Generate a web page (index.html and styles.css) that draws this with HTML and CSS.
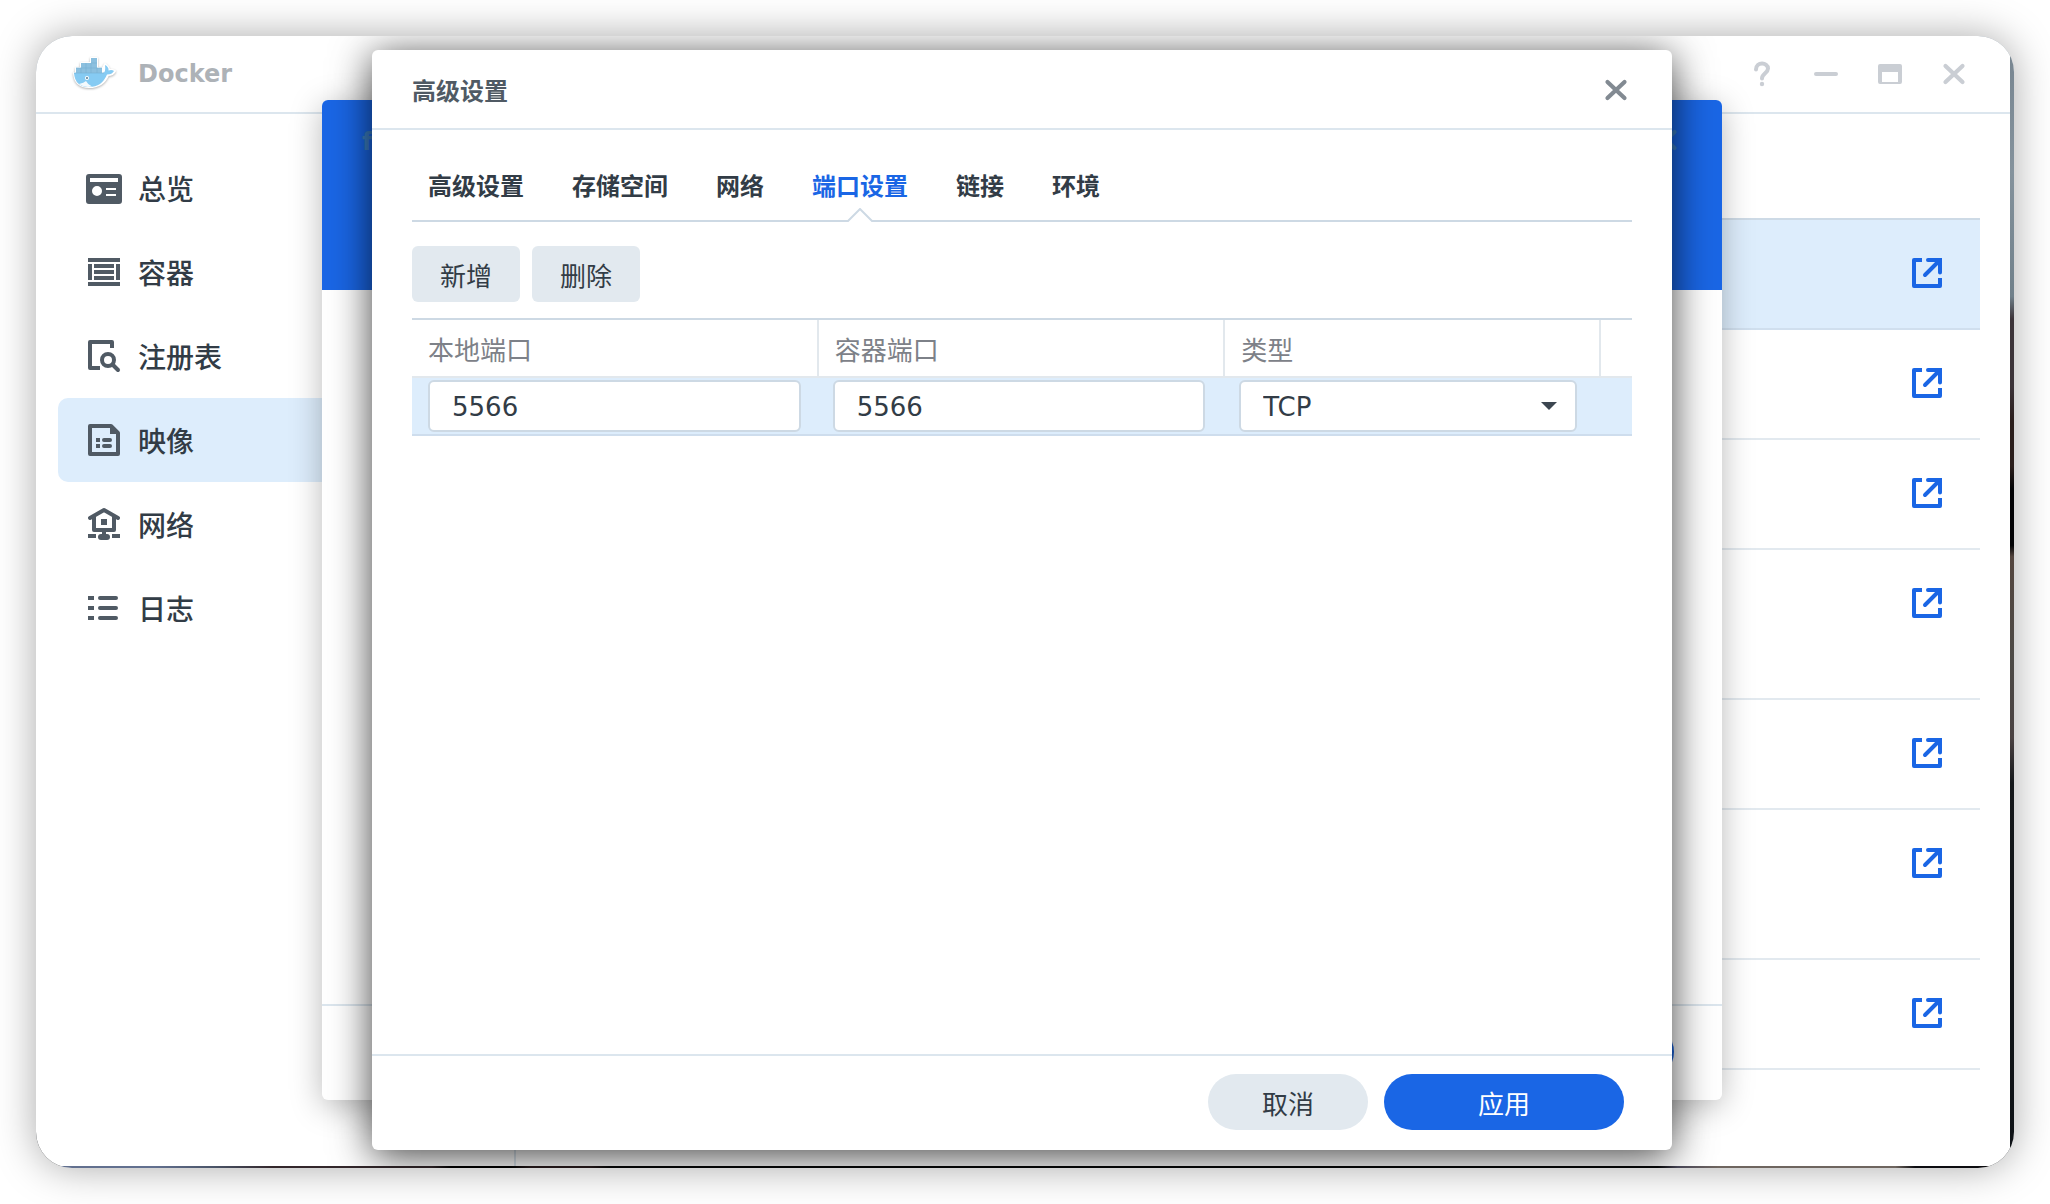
FILE: index.html
```html
<!DOCTYPE html>
<html lang="zh-CN">
<head>
<meta charset="utf-8">
<title>Docker</title>
<meta name="viewport" content="width=device-width, initial-scale=1">
<link rel="stylesheet" href="styles.css">
</head>
<body>
<svg class="sprite" aria-hidden="true">
  <symbol id="open" viewBox="0 0 30 30">
    <path d="M10 2H2V28H28V20" fill="none" stroke="currentColor" stroke-width="4" stroke-linejoin="round"/>
    <path d="M16 2H28V14.500M27 3L13 17" fill="none" stroke="currentColor" stroke-width="4" stroke-linecap="round"/>
    <path d="M22 0H30V8Z" fill="currentColor"/>
  </symbol>
  <symbol id="close" viewBox="0 0 32 32">
    <path d="M7.500 8L24.500 24M24.500 8L7.500 24" fill="none" stroke="currentColor" stroke-width="4.200" stroke-linecap="round"/>
  </symbol>
</svg>

<div class="window">
  <div class="app">
    <header class="titlebar">
      <svg class="logo" viewBox="0 0 46 36" aria-hidden="true">
        <g class="logo-edge">
          <path d="M2 17H32Q30 12 33 8Q37 11 37 14Q41 13 43 15Q41 19 36 19Q31 31 17 31Q3 31 2 17Z"/>
          <path d="M4 17V12H9V7H19V2H25V12H30V17Z"/>
        </g>
        <path fill="#86cbf3" d="M2 17H31Q34 16 33 9Q37 11 36.500 14.500Q40 13.500 42 15Q40 18.500 35 18.500Q30 31 17 31Q3 31 2 17Z"/>
        <path fill="#8cc0df" d="M4 17V12H9V7H19V2H25V12H30V17Z"/>
        <path fill="none" stroke="#7ab3d4" stroke-width="0.700" d="M4 12H30M9 12V17M14 7V17M19 7V17M25 12V17M19 7H25M2 17H32"/>
        <path fill="#f4fafd" d="M7 28Q12 27 14 25Q16 29 20 30.500Q12 32 7 28Z"/>
        <circle cx="15" cy="22" r="2" fill="#fff"/><circle cx="15" cy="22" r="1" fill="#557a90"/>
      </svg>
      <h1 class="app-title">Docker</h1>
      <div class="window-controls">
        <button type="button" aria-label="帮助"><svg viewBox="0 0 32 32"><path d="M10 11.500C10 3.500 22 4 22 10.500C22 15 16 15.500 16 20.500" fill="none" stroke="currentColor" stroke-width="4" stroke-linecap="round"/><circle cx="16" cy="26" r="2.200" fill="currentColor"/></svg></button>
        <button type="button" aria-label="最小化"><svg viewBox="0 0 32 32"><rect x="4" y="14" width="24" height="4" rx="2" fill="currentColor"/></svg></button>
        <button type="button" aria-label="最大化"><svg viewBox="0 0 32 32"><path fill="currentColor" fill-rule="evenodd" d="M6 6H26Q28 6 28 8V24Q28 26 26 26H6Q4 26 4 24V8Q4 6 6 6ZM8 14V24H24V14Z"/></svg></button>
        <button type="button" aria-label="关闭"><svg><use href="#close"/></svg></button>
      </div>
    </header>
    <div class="body">
      <nav class="sidebar">
        <a class="nav-item" href="#overview"><svg viewBox="0 0 36 36"><path fill="currentColor" fill-rule="evenodd" d="M3 4H33Q36 4 36 7V31Q36 34 33 34H3Q0 34 0 31V7Q0 4 3 4ZM4 8V12H32V8ZM20 18V20H30V18ZM20 24V26H30V24ZM6 21A5 5 0 1 0 16 21A5 5 0 1 0 6 21Z"/></svg><span>总览</span></a>
        <a class="nav-item" href="#container"><svg viewBox="0 0 36 36"><path fill="currentColor" d="M2 4H34V8H2ZM2 28H34V32H2ZM2 10H6V26H2ZM30 10H34V26H30ZM8 10H28V14H8ZM8 16H28V20H8ZM8 22H28V26H8Z"/></svg><span>容器</span></a>
        <a class="nav-item" href="#registry"><svg viewBox="0 0 36 36"><g fill="none" stroke="currentColor" stroke-width="4"><path stroke-linejoin="round" d="M26 10V4H4V30H14"/><circle cx="22" cy="22" r="6"/><path stroke-linecap="round" d="M26.500 26.500L32 32"/></g></svg><span>注册表</span></a>
        <a class="nav-item selected" href="#image" aria-current="page"><svg viewBox="0 0 36 36"><path fill="none" stroke="currentColor" stroke-width="4" stroke-linejoin="round" d="M4 4H25L32 11V32H4Z"/><path fill="currentColor" d="M24 3V12H33ZM10 16H14V20H10ZM10 22H14V26H10Z"/><path stroke="currentColor" stroke-width="4" stroke-linecap="round" d="M18 18H24M18 24H24"/></svg><span>映像</span></a>
        <a class="nav-item" href="#network"><svg viewBox="0 0 36 36"><g fill="none" stroke="currentColor" stroke-width="4" stroke-linejoin="round"><path stroke-linecap="round" d="M4 12L18 4L32 12"/><path d="M8 11V24H28V11"/></g><path fill="currentColor" d="M15 13H21V19H15ZM16 25H20V29H16ZM2 28H10V32H2ZM26 28H34V32H26Z"/><rect x="12" y="28" width="12" height="6" rx="3" fill="currentColor"/></svg><span>网络</span></a>
        <a class="nav-item" href="#log"><svg viewBox="0 0 36 36"><path fill="currentColor" d="M2 6H8V10H2ZM2 16H8V20H2ZM2 26H8V30H2Z"/><path stroke="currentColor" stroke-width="4" stroke-linecap="round" d="M14 8H30M14 18H30M14 28H30"/></svg><span>日志</span></a>
      </nav>
      <main class="images">
        <ul class="image-list">
          <li class="image-row selected"><a href="#open-1" aria-label="打开"><svg><use href="#open"/></svg></a></li>
          <li class="image-row"><a href="#open-2" aria-label="打开"><svg><use href="#open"/></svg></a></li>
          <li class="image-row"><a href="#open-3" aria-label="打开"><svg><use href="#open"/></svg></a></li>
          <li class="image-row tall"><a href="#open-4" aria-label="打开"><svg><use href="#open"/></svg></a></li>
          <li class="image-row"><a href="#open-5" aria-label="打开"><svg><use href="#open"/></svg></a></li>
          <li class="image-row tall"><a href="#open-6" aria-label="打开"><svg><use href="#open"/></svg></a></li>
          <li class="image-row"><a href="#open-7" aria-label="打开"><svg><use href="#open"/></svg></a></li>
        </ul>
      </main>
    </div>
  </div>

  <section class="dialog wizard">
    <header class="wizard-head">
      <h2>f</h2>
      <button type="button" class="wizard-close" aria-label="关闭"><svg><use href="#close"/></svg></button>
    </header>
    <footer class="wizard-foot"><button type="button" class="pill primary" aria-label="下一步"></button></footer>
  </section>

  <section class="dialog settings" role="dialog" aria-labelledby="settings-title">
    <header class="settings-head">
      <h2 id="settings-title">高级设置</h2>
      <button type="button" class="settings-close" aria-label="关闭"><svg><use href="#close"/></svg></button>
    </header>
    <div class="settings-body">
      <nav class="tabs">
        <a class="tab" href="#advanced">高级设置</a>
        <a class="tab" href="#volume">存储空间</a>
        <a class="tab" href="#net">网络</a>
        <a class="tab active" href="#port" aria-current="true">端口设置<svg class="notch" viewBox="0 0 26 14" aria-hidden="true"><path d="M0 14L2 12H24L26 14Z" fill="#fff"/><path d="M0 13H1L13 1L25 13H26" fill="#fff" stroke="#cdd9e4" stroke-width="2"/></svg></a>
        <a class="tab" href="#link">链接</a>
        <a class="tab" href="#env">环境</a>
      </nav>
      <div class="toolbar">
        <button type="button" class="tool">新增</button>
        <button type="button" class="tool">删除</button>
      </div>
      <table class="ports">
        <colgroup><col class="col-port"><col class="col-port"><col class="col-type"><col></colgroup>
        <thead>
          <tr><th scope="col">本地端口</th><th scope="col">容器端口</th><th scope="col">类型</th><td></td></tr>
        </thead>
        <tbody>
          <tr>
            <td><input type="text" value="5566" aria-label="本地端口"></td>
            <td><input type="text" value="5566" aria-label="容器端口"></td>
            <td><div class="select"><select aria-label="类型"><option>TCP</option><option>UDP</option></select></div></td>
            <td></td>
          </tr>
        </tbody>
      </table>
    </div>
    <footer class="settings-foot">
      <button type="button" class="pill">取消</button>
      <button type="button" class="pill primary">应用</button>
    </footer>
  </section>
</div>
</body>
</html>
```
FILE: styles.css
```css
* { box-sizing: border-box; }

body {
  margin: 0;
  padding: 36px;
  background: #fff;
  color: #323c46;
  font: 26px/36px "DejaVu Sans", "Noto Sans CJK SC", sans-serif;
}

h1, h2, ul { margin: 0; padding: 0; list-style: none; }
button, input, select { font: inherit; color: inherit; margin: 0; border: 0; padding: 0; background: none; }
button svg, a svg { display: block; }
a { color: inherit; text-decoration: none; }
.sprite { display: none; }

/* the wallpaper shows as a thin strip on the right and bottom */
.window {
  position: relative;
  display: flex;
  min-height: calc(100vh - 72px);
  padding: 0 4px 2px 0;
  border-radius: 36px;
  overflow: hidden;
  box-shadow: 0 0 40px rgba(0, 0, 0, .34);
  background:
    linear-gradient(90deg, #62708f 0 6%, #4a5468 9%, #33272b 12% 20%, #000 21% 24%, #2a1d1f 25% 28%, #070809 29% 82%, #4c4a5c 83%, #6e655f 85% 94%, #0c0c10 95%) left bottom / 100% 2px no-repeat,
    linear-gradient(180deg, #76848f 0, #84929c 12%, #70808a 23%, #3b3338 25% 31%, #2b1e1c 34% 38%, #020305 40% 45%, #54463f 46%, #4d4a46 55%, #4a4242 62%, #14171a 66%, #0e1216 100%);
}

.app { flex: 1; display: flex; flex-direction: column; background: #fff; }

.titlebar {
  display: flex;
  align-items: center;
  height: 78px;
  padding: 0 40px 0 36px;
  border-bottom: 2px solid #dce6ee;
}
.logo { width: 46px; height: 36px; margin-right: 20px; overflow: visible; }
.logo-edge { fill: #fff; stroke: #fff; stroke-width: 2; stroke-linejoin: round; filter: drop-shadow(0 1px 1px rgba(0, 0, 0, .3)); }
.app-title { flex: 1; font-size: 24px; line-height: 36px; color: #adb2b7; }
.window-controls { display: flex; gap: 32px; color: #caced4; }
.window-controls svg, .wizard-close svg, .settings-close svg { display: block; width: 32px; height: 32px; }

.body { flex: 1; display: flex; }
.sidebar { width: 480px; padding: 32px 22px; border-right: 2px solid #dce6ee; }
.nav-item {
  display: flex;
  align-items: center;
  gap: 16px;
  height: 84px;
  padding: 0 28px;
  border-radius: 10px;
  font-size: 28px;
  font-weight: 500;
}
.nav-item svg { width: 36px; height: 36px; color: #505a64; }
.nav-item span { padding-top: 6px; }
.nav-item.selected { background: #ddedfc; }

.images { flex: 1; padding: 104px 30px 0; }
.image-list { border-top: 2px solid #cddae6; }
.image-row {
  display: flex;
  justify-content: flex-end;
  align-items: flex-start;
  height: 110px;
  padding: 38px 38px 0;
  border-bottom: 2px solid #e2e9ef;
}
.image-row.tall { height: 150px; }
.image-row.selected { background: #ddedfc; border-color: #d0dfee; }
.image-row svg { width: 30px; height: 30px; color: #1a66e5; }

.dialog {
  position: absolute;
  display: flex;
  flex-direction: column;
  border-radius: 6px;
  overflow: hidden;
  background: #fff;
}
.dialog h2 { font-size: 24px; line-height: 36px; }

.wizard { inset: 64px 292px 68px 286px; justify-content: space-between; box-shadow: 0 6px 32px rgba(0, 0, 0, .28); }
.wizard-head {
  display: flex;
  justify-content: space-between;
  align-items: flex-start;
  height: 190px;
  padding: 24px 40px;
  background: #1a66e5;
  color: #3c7fc4;
}
.wizard-foot {
  display: flex;
  justify-content: flex-end;
  padding: 18px 48px 20px;
  border-top: 2px solid #dce6ee;
}

.settings { inset: 14px 342px 18px 336px; box-shadow: 0 6px 40px rgba(0, 0, 0, .75); }
.settings-head {
  display: flex;
  justify-content: space-between;
  align-items: center;
  height: 80px;
  padding: 2px 40px 0;
  border-bottom: 2px solid #dce6ee;
  color: #505a64;
}
.settings-head h2 { padding-top: 4px; }
.settings-close { color: #828a92; }
.settings-body { flex: 1; padding: 32px 40px; }

.tabs {
  display: flex;
  gap: 48px;
  padding: 0 16px;
  border-bottom: 2px solid #cdd9e4;
  font-size: 24px;
  font-weight: bold;
}
.tab { position: relative; line-height: 50px; padding-bottom: 8px; }
.tab.active { color: #1a66e5; }
.notch { position: absolute; left: calc(50% - 13px); bottom: -2px; width: 26px; height: 14px; }

.toolbar { display: flex; gap: 12px; padding: 24px 0 16px; }
.tool { height: 56px; padding: 6px 28px 0; border-radius: 6px; background: #e2e9ef; }

.ports {
  width: 100%;
  table-layout: fixed;
  border-collapse: separate;
  border-spacing: 0;
  border-top: 2px solid #cdd9e4;
}
.col-port { width: 33.33%; }
.col-type { width: 30.8%; }
.ports thead > tr > * { height: 58px; padding: 6px 16px 0; border-bottom: 2px solid #e2e8ed; }
.ports th { text-align: left; font-weight: normal; color: #7d8188; border-right: 2px solid #e2e8ed; }
.ports tbody td { height: 58px; padding: 2px 20px 2px 14px; background: #ddedfc; border-bottom: 2px solid #cedded; }
.ports tbody td:first-child { padding: 2px 18px 2px 16px; }
.ports tbody td:nth-child(3) { padding-right: 24px; }
.ports input, .ports select {
  display: block;
  width: 100%;
  height: 52px;
  padding: 2px 22px 0;
  border: 2px solid #cdd9e4;
  border-radius: 6px;
  background: #fff;
}
.ports select { appearance: none; }
.select { position: relative; }
.select::after {
  content: "";
  position: absolute;
  right: 20px;
  top: 22px;
  border: solid transparent;
  border-width: 8px 8px 0;
  border-top-color: #3c4650;
}

.settings-foot {
  display: flex;
  justify-content: flex-end;
  gap: 16px;
  padding: 18px 48px 20px;
  border-top: 2px solid #dce6ee;
}
.pill { width: 160px; height: 56px; padding-top: 6px; border-radius: 28px; background: #e2e9ef; }
.pill.primary { width: 240px; background: #1a66e5; color: #fff; }
```
